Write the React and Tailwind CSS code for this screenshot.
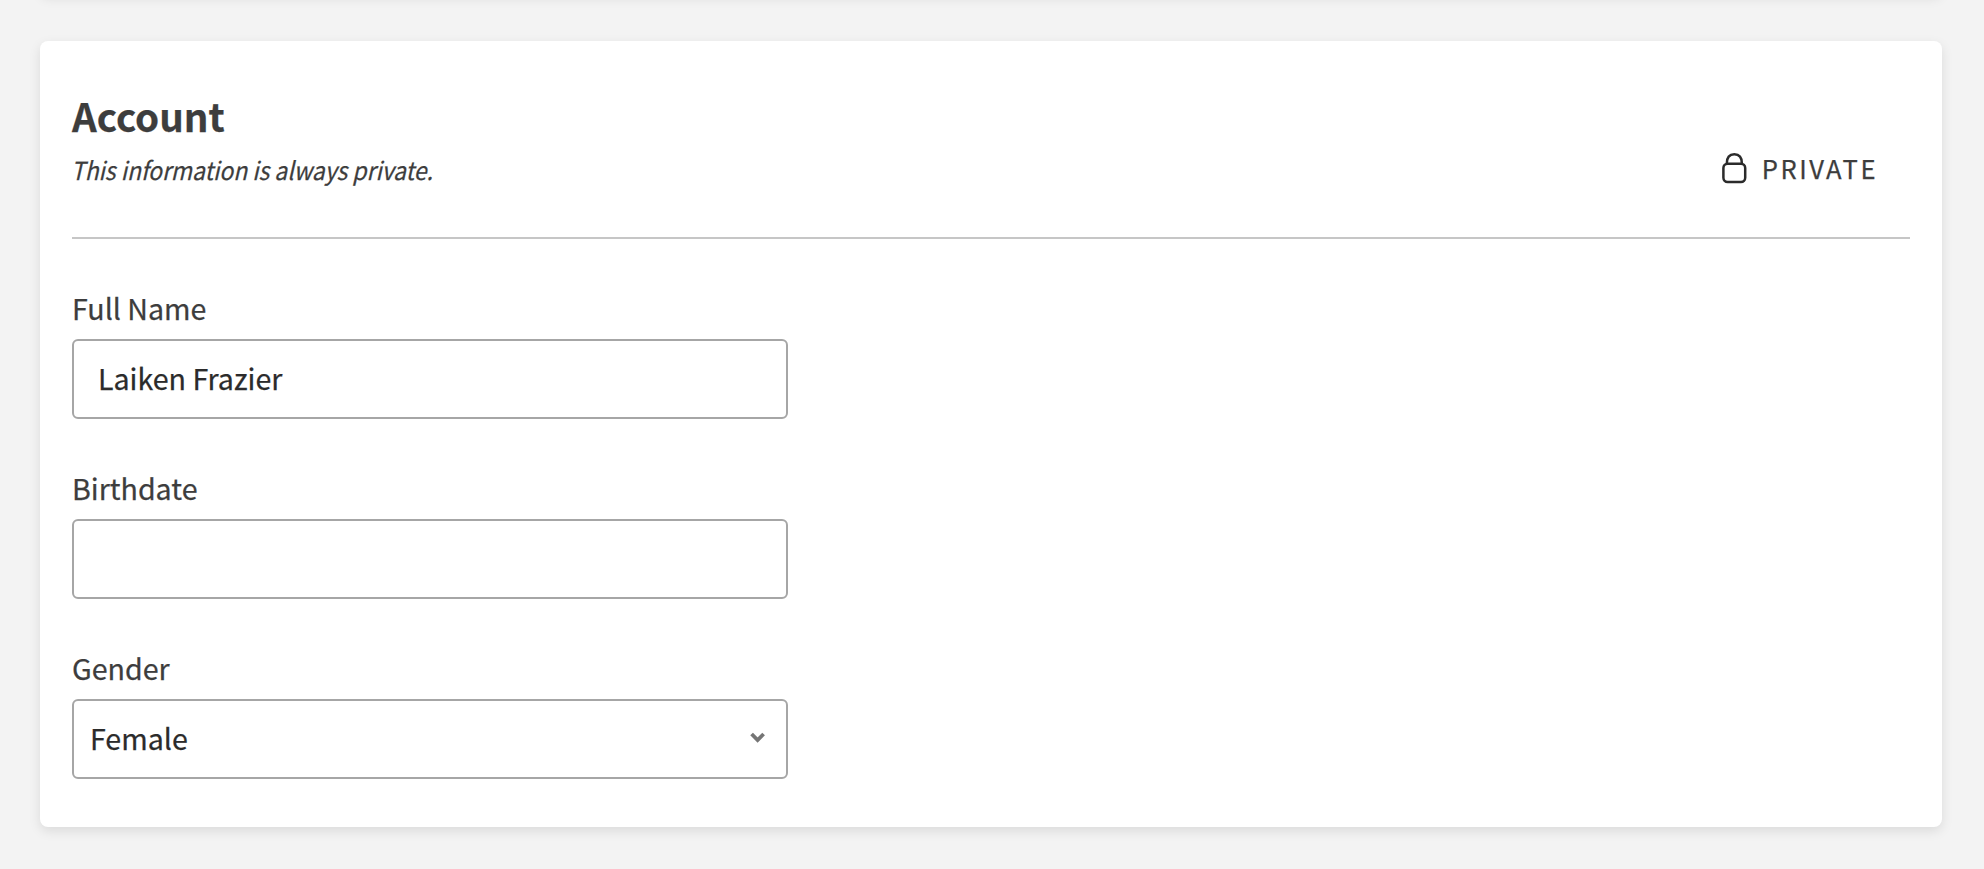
import React from 'react';

const LockIcon = () => (
  <svg className="w-[26px] h-8 -mt-1" viewBox="0 0 26 32" fill="none" stroke="#2b2b2b" strokeWidth="2.5">
    <rect x="1.4" y="11.7" width="21.8" height="18.3" rx="4.2" />
    <path d="M4.8 11.5C4.8 5.5 7.6 2.2 12.3 2.2s7.6 3.3 7.6 9.3" />
  </svg>
);

const ChevronIcon = () => (
  <svg className="w-4 h-3" viewBox="0 0 16 12" fill="none" stroke="#757575" strokeWidth="3.8">
    <path d="M1.6 2l6 6 6-6" />
  </svg>
);

const Field = ({ id, label, children }) => (
  <div className="w-[716px]">
    <label htmlFor={id} className="block h-[49px] text-[28.6px] leading-[36px] text-[#3d3d3d]">
      {label}
    </label>
    {children}
  </div>
);

const TextInput = ({ id, value }) => (
  <input
    id={id}
    type="text"
    defaultValue={value}
    className="block w-full h-20 px-6 pb-1 rounded-md border-2 border-[#a6a6a6] bg-white text-[28.6px] text-[#2b2b2b] outline-none [-webkit-text-stroke:0.25px]"
  />
);

const App = () => {
  return (
    <div className="h-[869px] overflow-hidden bg-[#f3f3f3] pl-10 pr-[42px] font-['Noto_Sans_CJK_SC',sans-serif] [-webkit-text-stroke:0.25px]">
      {/* Bottom edge of the previous card */}
      <div className="h-5 -mt-[26px] rounded-lg bg-white shadow-[0_4px_12px_rgba(0,0,0,0.1)]" />

      <section className="mt-[47px] h-[786px] px-8 pt-[52px] rounded-lg bg-white shadow-[0_4px_12px_rgba(0,0,0,0.1)]">
        <div className="flex items-end justify-between h-[146px] pb-[50px] border-b-2 border-[#c6c6c6]">
          <div>
            <h2 className="text-[38.6px] leading-[48px] font-bold text-[#3d3d3d]">Account</h2>
            <p className="mt-3 -ml-px text-[25px] leading-[36px] italic text-[#3d3d3d] origin-left scale-x-[0.914]">This information is always private.</p>
          </div>
          <div className="flex items-center gap-[14px] pr-8 pb-px">
            <LockIcon />
            <span className="-mt-1 text-[25.6px] leading-[36px] tracking-[2.5px] text-[#3d3d3d]">PRIVATE</span>
          </div>
        </div>

        <div className="flex flex-col gap-[51px] pt-[51px]">
          <Field id="name" label="Full Name">
            <TextInput id="name" value="Laiken Frazier" />
          </Field>
          <Field id="birthdate" label="Birthdate">
            <TextInput id="birthdate" value="" />
          </Field>
          <Field id="gender" label="Gender">
            <button
              id="gender"
              type="button"
              className="flex items-center justify-between w-full h-20 pl-4 pr-5 pb-0.5 rounded-md border-2 border-[#a6a6a6] bg-white text-[28.6px] text-[#2b2b2b]"
            >
              <span>Female</span>
              <ChevronIcon />
            </button>
          </Field>
        </div>
      </section>
    </div>
  );
};

export default App;
